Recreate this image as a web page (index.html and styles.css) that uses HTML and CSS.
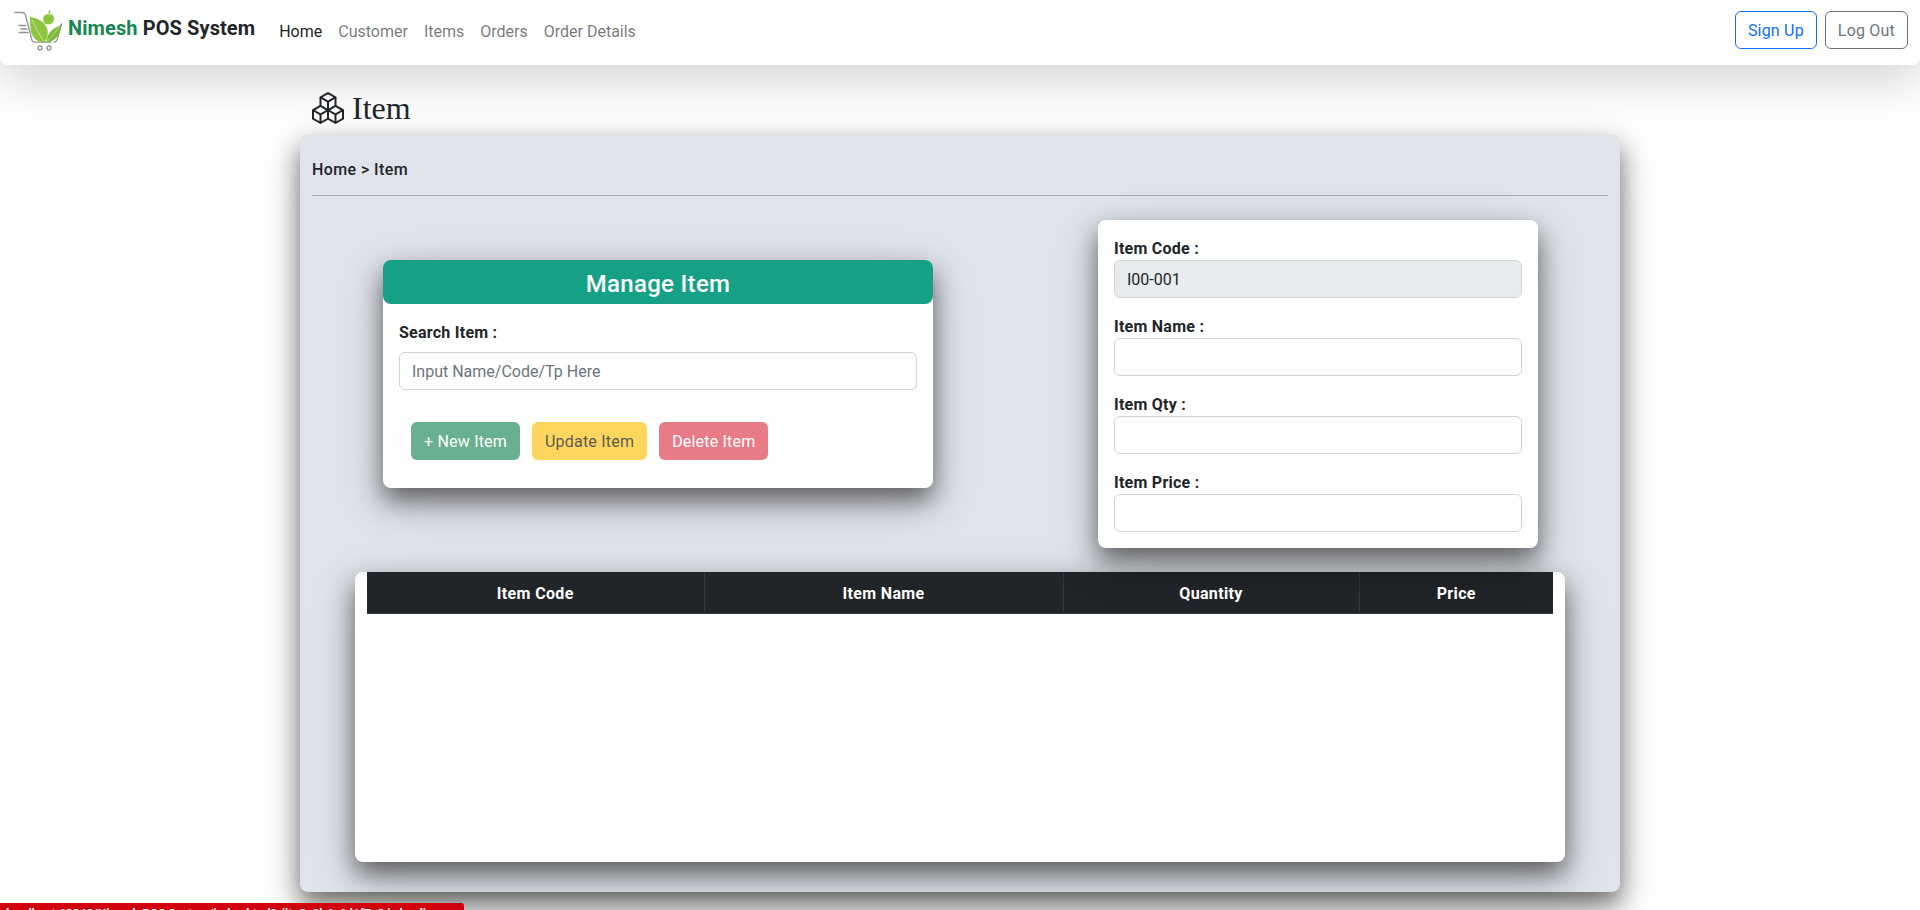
FILE: index.html
```html
<!DOCTYPE html>
<html lang="en">
<head>
	<meta charset="UTF-8">
	<title>Nimesh POS System</title>
	<link rel="stylesheet" href="styles.css">
</head>
<body>

	<nav class="navbar">
		<a class="brand" href="#">
			<svg class="brand-logo" viewBox="12 8 52 50" aria-hidden="true">
				<g fill="none" stroke="#8f9496" stroke-width="1.3" stroke-linecap="round">
					<path d="M14 12.500h7.500c1.600 0 2.400.8 2.900 2.300l6.600 25.400c.4 1.300 1.300 2 2.700 2h15.800"/>
					<path d="M60.500 24l-4.400 15.600c-.4 1.500-1.400 2.400-3 2.600"/>
					<path d="M18 25.500h7M20 29h6M18 32.500h9"/>
					<circle cx="39" cy="48" r="2"/>
					<circle cx="48" cy="48" r="2"/>
				</g>
				<path fill="#8cc63f" d="M29 17c9 1.500 16 5.500 17.500 13.500 1 5.500-1 9-3 12-7-.5-12-4-13.500-11-.9-4.500-1-9.500-1-14.500z"/>
				<path fill="#7cb83a" d="M60 25c-.5 6.500-2.500 13-10 16.500-2 .9-3.500.9-4.500.5 .8-7 3.500-12.500 14.500-17z"/>
				<path fill="none" stroke="#dcefc0" stroke-width=".7" d="M31 20c3.500 7 7 14 11.500 21M58 27c-3.500 5-7 9.500-11.500 14"/>
				<path fill="#8cc63f" d="M48 14.500c2.700-1 5 .8 5 4 0 3.200-2.200 5.800-4.500 5.800-.6 0-.9-.3-1.500-.3s-.9.3-1.500.3c-1.800 0-3.300-2.800-3.300-5.600 0-3.200 2.800-5.200 5.800-4.200z"/>
				<path fill="#8cc63f" d="M47.500 14c-.4-1.700.3-3.300 1.800-4.200.5 1.700 0 3.300-1.800 4.200z"/>
			</svg>
			<span class="brand-text"><span class="brand-green">Nimesh</span> POS System</span>
		</a>
		<ul class="nav-links">
			<li><a class="active" href="#">Home</a></li>
			<li><a href="#">Customer</a></li>
			<li><a href="#">Items</a></li>
			<li><a href="#">Orders</a></li>
			<li><a href="#">Order Details</a></li>
		</ul>
		<div class="nav-actions">
			<button class="btn btn-outline-blue">Sign Up</button>
			<button class="btn btn-outline-grey">Log Out</button>
		</div>
	</nav>

	<main class="container">
		<h1 class="page-title">
			<svg class="page-icon" viewBox="0 0 16 16" fill="currentColor" aria-hidden="true">
				<path d="M7.752.066a.5.5 0 0 1 .496 0l3.750 2.143a.5.5 0 0 1 .252.434v3.995l3.498 2A.5.5 0 0 1 16 9.070v4.286a.5.5 0 0 1-.252.434l-3.750 2.143a.5.5 0 0 1-.496 0l-3.502-2-3.502 2.001a.5.5 0 0 1-.496 0l-3.750-2.143A.5.5 0 0 1 0 13.357V9.071a.5.5 0 0 1 .252-.434L3.750 6.638V2.643a.5.5 0 0 1 .252-.434L7.752.066ZM4.250 7.504 1.508 9.071l2.742 1.567 2.742-1.567L4.250 7.504ZM7.500 9.933l-2.750 1.571v3.134l2.750-1.571V9.933Zm1 3.134 2.750 1.571v-3.134L8.500 9.933v3.134Zm.508-3.996 2.742 1.567 2.742-1.567-2.742-1.567-2.742 1.567Zm2.242-2.433V3.504L8.500 5.076V8.210l2.750-1.572ZM7.500 8.210V5.076L4.750 3.504v3.134L7.500 8.210ZM5.258 2.643 8 4.210l2.742-1.567L8 1.076 5.258 2.643ZM15 9.933l-2.750 1.571v3.134L15 13.067V9.933ZM3.750 14.638v-3.134L1 9.933v3.134l2.750 1.571Z"/>
			</svg>
			Item
		</h1>

		<section class="panel">
			<div class="breadcrumb">Home &gt; Item</div>
			<hr class="divider">

			<div class="top-row">
				<div class="card manage-card">
					<h2 class="manage-title">Manage Item</h2>
					<div class="manage-body">
						<label class="field-label">Search Item :</label>
						<input class="field-input" type="text" placeholder="Input Name/Code/Tp Here">
						<div class="manage-buttons">
							<button class="btn btn-green" disabled>+ New Item</button>
							<button class="btn btn-yellow" disabled>Update Item</button>
							<button class="btn btn-red" disabled>Delete Item</button>
						</div>
					</div>
				</div>

				<form class="card item-form">
					<div class="form-row">
						<label class="field-label">Item Code :</label>
						<input class="field-input" type="text" value="I00-001" disabled>
					</div>
					<div class="form-row">
						<label class="field-label">Item Name :</label>
						<input class="field-input" type="text">
					</div>
					<div class="form-row">
						<label class="field-label">Item Qty :</label>
						<input class="field-input" type="text">
					</div>
					<div class="form-row">
						<label class="field-label">Item Price :</label>
						<input class="field-input" type="text">
					</div>
				</form>
			</div>

			<div class="card table-card">
				<table class="item-table">
					<thead>
						<tr>
							<th class="col-code">Item Code</th>
							<th class="col-name">Item Name</th>
							<th class="col-qty">Quantity</th>
							<th class="col-price">Price</th>
						</tr>
					</thead>
					<tbody></tbody>
				</table>
			</div>
		</section>
	</main>

	<div class="error-bar">localhost:63342/Nimesh POS System/index.html?_ijt=8c2b4a6d1f7e3 is loading...</div>

</body>
</html>
```

FILE: styles.css
```css
* {
	box-sizing: border-box;
}
body {
	font-family: Roboto, "Open Sans", sans-serif;
	font-size: 16px;
	line-height: 24px;
	margin: 0;
	padding: 0;
	background-color: #fff;
	color: #212529;
	height: 910px;
	overflow: hidden;
}

/* navbar */
.navbar {
	display: flex;
	align-items: center;
	height: 65px;
	padding: 0 12px 5px;
	background-color: #fff;
	border-radius: 0 0 8px 8px;
	box-shadow: 0 16px 48px rgba(0, 0, 0, 0.175);
}
.brand {
	display: flex;
	align-items: center;
	gap: 3px;
	margin-right: 16px;
	text-decoration: none;
	color: #212529;
}
.brand-logo {
	width: 52px;
	height: 50px;
	margin-top: 6px;
	margin-left: 1px;
}
.brand-text {
	font-size: 20px;
	font-weight: 700;
	letter-spacing: 0.1px;
	margin-top: -4px;
}
.brand-green {
	color: #198754;
}
.nav-links {
	display: flex;
	list-style: none;
	margin: 0;
	padding: 0;
}
.nav-links a {
	display: block;
	padding: 10px 8px 6px;
	color: rgba(0, 0, 0, 0.55);
	text-decoration: none;
}
.nav-links a.active {
	color: rgba(0, 0, 0, 0.9);
}
.nav-actions {
	display: flex;
	gap: 8px;
	margin-left: auto;
}

/* buttons */
.btn {
	height: 38px;
	padding: 7px 12px 5px;
	font-family: inherit;
	font-size: 16px;
	line-height: 24px;
	letter-spacing: 0.2px;
	border: 1px solid transparent;
	border-radius: 6px;
	background: transparent;
}
.btn-outline-blue {
	color: #0d6efd;
	border-color: #0d6efd;
}
.btn-outline-grey {
	color: #6c757d;
	border-color: #6c757d;
}
.btn-green {
	color: #fff;
	background-color: #198754;
	opacity: 0.65;
}
.btn-yellow {
	color: #000;
	background-color: #ffc107;
	opacity: 0.65;
}
.btn-red {
	color: #fff;
	background-color: #dc3545;
	opacity: 0.65;
}

/* page */
.container {
	width: 1320px;
	margin: 0 auto;
}
.page-title {
	display: flex;
	align-items: center;
	gap: 8px;
	height: 70px;
	margin: 0;
	padding: 16px 12px 0;
	font-family: "Liberation Serif", "Times New Roman", serif;
	font-size: 32px;
	font-weight: 400;
}
.page-icon {
	width: 32px;
	height: 32px;
}
.panel {
	height: 757px;
	padding: 12px;
	background-color: #dfe3ea;
	border-radius: 8px;
	box-shadow: 0 12px 24px rgba(0, 0, 0, 0.5), 0 16px 48px rgba(0, 0, 0, 0.175);
}
.breadcrumb {
	padding-top: 11px;
	font-weight: 500;
	letter-spacing: 0.4px;
	line-height: 24px;
}
.divider {
	margin: 13px 0 24px;
	border: 0;
	border-top: 1px solid #a9adb2;
}
.card {
	background-color: #fff;
	border-radius: 8px;
	box-shadow: 0 12px 24px rgba(0, 0, 0, 0.5), 0 16px 48px rgba(0, 0, 0, 0.175);
}
.top-row {
	display: flex;
	align-items: flex-start;
}

/* manage item card */
.manage-card {
	width: 550px;
	margin: 40px 0 0 71px;
}
.manage-title {
	height: 44px;
	margin: 0;
	padding-top: 4px;
	background-color: #16a085;
	border-radius: 8px;
	color: #fff;
	font-size: 24px;
	font-weight: 500;
	letter-spacing: 0.3px;
	line-height: 40px;
	text-align: center;
}
.manage-body {
	padding: 16px 16px 28px;
}
.field-label {
	display: block;
	height: 24px;
	padding-top: 1px;
	font-weight: 700;
	letter-spacing: 0.25px;
}
.manage-body .field-input {
	margin-top: 8px;
}
.field-input {
	display: block;
	width: 100%;
	height: 38px;
	padding: 6px 12px;
	font-family: inherit;
	font-size: 16px;
	color: #212529;
	background-color: #fff;
	border: 1px solid #ced4da;
	border-radius: 6px;
}
.field-input::placeholder {
	color: #6c757d;
}
.field-input:disabled {
	background-color: #e9ecef;
}
.manage-buttons {
	display: flex;
	gap: 12px;
	margin-top: 32px;
	padding-left: 12px;
}

/* item form */
.item-form {
	display: flex;
	flex-direction: column;
	gap: 16px;
	width: 440px;
	margin-left: 165px;
	padding: 16px;
}

/* table */
.table-card {
	width: 1210px;
	height: 290px;
	margin: 24px 0 0 43px;
	padding: 0 12px;
}
.item-table {
	width: 100%;
	border-collapse: collapse;
	table-layout: fixed;
}
.item-table th {
	height: 41px;
	padding: 9px 8px 5px;
	background-color: #212529;
	border-bottom: 1px solid #32383e;
	color: #fff;
	font-weight: 700;
	letter-spacing: 0.35px;
	text-align: center;
}
.item-table th + th {
	border-left: 1px solid #32383e;
}
.col-code {
	width: 337px;
}
.col-name {
	width: 359px;
}
.col-qty {
	width: 296px;
}
.col-price {
	width: 194px;
}

/* red bar sitting on the bottom edge */
.error-bar {
	position: fixed;
	left: 0;
	top: 903px;
	width: 464px;
	height: 20px;
	padding: 3px 6px 0;
	background-color: #d0000f;
	border-radius: 0 3px 0 0;
	color: #fff;
	font-size: 12px;
	font-weight: 700;
	line-height: 16px;
	white-space: nowrap;
	overflow: hidden;
}
```
